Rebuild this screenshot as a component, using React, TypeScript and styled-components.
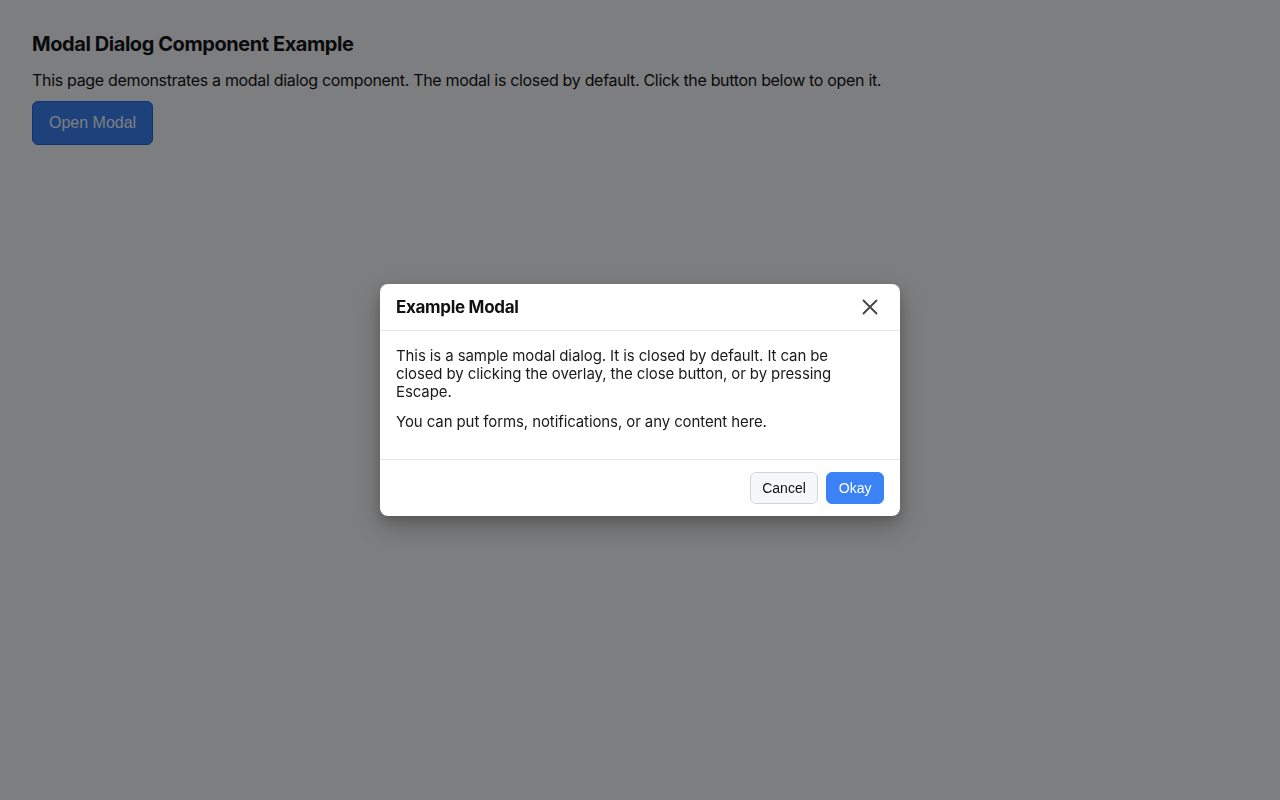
import React from "react";
import styled, { createGlobalStyle } from "styled-components";

const Global = createGlobalStyle`
  html, body { margin: 0; padding: 0; background: #ffffff; }
  body { font-family: Inter, "Noto Sans", sans-serif; color: #111111; }
  * { box-sizing: border-box; }
`;

const Page = styled.main`
  padding: 32px;
  min-height: 800px;
`;

const Heading = styled.h1`
  margin: 0 0 12px;
  font-size: 20px;
  line-height: 24px;
  font-weight: 700;
  letter-spacing: -0.43px;
`;

const Intro = styled.p`
  margin: 0 0 9px;
  font-size: 16px;
  line-height: 24px;
  letter-spacing: -0.32px;
`;

const OpenButton = styled.button`
  font-family: "Liberation Sans", Arial, sans-serif;
  font-size: 16px;
  line-height: 18px;
  padding: 12px 16px;
  color: #ffffff;
  background: #3b82f6;
  border: 1px solid #2563eb;
  border-radius: 6px;
  cursor: pointer;
`;

const Overlay = styled.div`
  position: fixed;
  inset: 0;
  background: rgba(2, 3, 6, 0.515);
  display: flex;
  align-items: center;
  justify-content: center;
`;

const Dialog = styled.div`
  width: 520px;
  background: #ffffff;
  border-radius: 8px;
  box-shadow: 0 10px 25px rgba(0, 0, 0, 0.25), 0 4px 10px rgba(0, 0, 0, 0.12);
  display: flex;
  flex-direction: column;
`;

const Header = styled.div`
  display: flex;
  align-items: center;
  justify-content: space-between;
  padding: 11px 16px;
  height: 47px;
  border-bottom: 1px solid #e5e7eb;
`;

const Title = styled.h2`
  margin: 0;
  font-size: 17px;
  line-height: 24px;
  font-weight: 700;
  color: #111111;
  letter-spacing: -0.3px;
`;

const CloseButton = styled.button`
  width: 28px;
  height: 28px;
  border: none;
  background: transparent;
  padding: 0;
  display: flex;
  align-items: center;
  justify-content: center;
  cursor: pointer;
  color: #444444;
`;

const Body = styled.div`
  padding: 16px 28px 16px 16px;
  border-bottom: 1px solid #e5e7eb;
`;

const BodyText = styled.p`
  margin: 0 0 12px;
  font-size: 15px;
  line-height: 18px;
  color: #1a1a1a;
  letter-spacing: -0.1px;
`;

const Footer = styled.div`
  display: flex;
  justify-content: flex-end;
  gap: 8px;
  padding: 12px 16px;
`;

const ActionButton = styled.button<{ $primary?: boolean }>`
  font-family: "Liberation Sans", Arial, sans-serif;
  font-size: 14px;
  line-height: 16px;
  padding: 7px 11.5px;
  border-radius: 6px;
  cursor: pointer;
  border: 1px solid ${(p) => (p.$primary ? "#3b82f6" : "#d1d5db")};
  background: ${(p) => (p.$primary ? "#3b82f6" : "#f6f7f9")};
  color: ${(p) => (p.$primary ? "#ffffff" : "#111111")};
`;

export default function App() {
  return (
    <>
      <Global />
      <Page>
        <Heading>Modal Dialog Component Example</Heading>
        <Intro>
          This page demonstrates a modal dialog component. The modal is closed by default. Click the button below to open it.
        </Intro>
        <OpenButton>Open Modal</OpenButton>
      </Page>
      <Overlay>
        <Dialog role="dialog" aria-modal="true">
          <Header>
            <Title>Example Modal</Title>
            <CloseButton aria-label="Close">
              <svg width="16" height="16" viewBox="0 0 16 16" fill="none">
                <path d="M1.5 1.5 L14.5 14.5 M14.5 1.5 L1.5 14.5" stroke="currentColor" strokeWidth="1.8" strokeLinecap="round" />
              </svg>
            </CloseButton>
          </Header>
          <Body>
            <BodyText>
              This is a sample modal dialog. It is closed by default. It can be closed by clicking the overlay, the close button, or by pressing Escape.
            </BodyText>
            <BodyText>You can put forms, notifications, or any content here.</BodyText>
          </Body>
          <Footer>
            <ActionButton>Cancel</ActionButton>
            <ActionButton $primary>Okay</ActionButton>
          </Footer>
        </Dialog>
      </Overlay>
    </>
  );
}
